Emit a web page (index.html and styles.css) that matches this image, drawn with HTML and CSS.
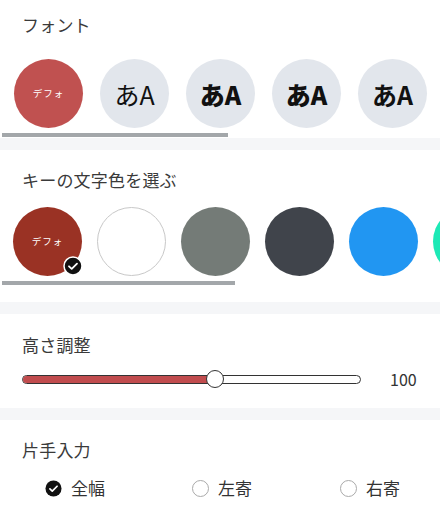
FILE: index.html
```html
<!DOCTYPE html>
<html lang="ja">
<head>
<meta charset="utf-8">
<link rel="stylesheet" href="styles.css">
</head>
<body>
<div class="page">
  <section class="sec sec-font">
    <div class="label">フォント</div>
    <div class="row row-font">
      <div class="circle fc-default"><span class="def">デフォ</span></div>
      <div class="circle fc"><span class="aa w4">あA</span></div>
      <div class="circle fc"><span class="aa w9">あA</span></div>
      <div class="circle fc"><span class="aa w9">あA</span></div>
      <div class="circle fc"><span class="aa w7">あA</span></div>
    </div>
    <div class="scroll scroll1"></div>
  </section>
  <div class="band"></div>
  <section class="sec sec-color">
    <div class="label">キーの文字色を選ぶ</div>
    <div class="row row-color">
      <div class="circle cc c-red"><span class="def">デフォ</span>
        <span class="badge"><svg viewBox="0 0 20 20" width="20" height="20"><circle cx="10" cy="10" r="9" fill="#111" stroke="#fff" stroke-width="1.5"/><path d="M6 10.3l2.7 2.6L14 7.6" fill="none" stroke="#fff" stroke-width="1.8" stroke-linecap="round" stroke-linejoin="round"/></svg></span>
      </div>
      <div class="circle cc c-white"></div>
      <div class="circle cc c-gray"></div>
      <div class="circle cc c-dark"></div>
      <div class="circle cc c-blue"></div>
      <div class="circle cc c-teal"></div>
    </div>
    <div class="scroll scroll2"></div>
  </section>
  <div class="band"></div>
  <section class="sec sec-height">
    <div class="label">高さ調整</div>
    <div class="slider-row">
      <div class="track">
        <div class="fill" style="width:57%"></div>
        <div class="thumb" style="left:57%"></div>
      </div>
      <div class="value">100</div>
    </div>
  </section>
  <div class="band"></div>
  <section class="sec sec-hand">
    <div class="label">片手入力</div>
    <div class="radios">
      <div class="radio">
        <svg class="rb" viewBox="0 0 18 18" width="17" height="17"><circle cx="9" cy="9" r="8.5" fill="#111"/><path d="M5.2 9.3l2.5 2.4L12.8 6.6" fill="none" stroke="#fff" stroke-width="1.8" stroke-linecap="round" stroke-linejoin="round"/></svg>
        <span class="rt">全幅</span>
      </div>
      <div class="radio">
        <span class="rb-empty"></span>
        <span class="rt">左寄</span>
      </div>
      <div class="radio">
        <span class="rb-empty"></span>
        <span class="rt">右寄</span>
      </div>
    </div>
  </section>
</div>
</body>
</html>
```
FILE: styles.css
```css
html, body {
  margin: 0;
  padding: 0;
  background: #fff;
}
body {
  font-family: "Noto Sans CJK JP", "Noto Sans", sans-serif;
  color: #333;
  width: 440px;
  height: 515px;
  overflow: hidden;
}
.page {
  display: flex;
  flex-direction: column;
}
.label {
  font-size: 17px;
  line-height: 22px;
  height: 22px;
  padding-left: 22px;
  color: #3a3a3a;
  letter-spacing: 0.2px;
}
.sec-font { height: 138px; padding-top: 14px; box-sizing: border-box; }
.sec-color { height: 152px; padding-top: 19px; box-sizing: border-box; }
.sec-height { height: 94px; padding-top: 20px; box-sizing: border-box; }
.sec-hand { height: 95px; padding-top: 19px; box-sizing: border-box; }

.band {
  height: 12px;
  background: #f5f6f8;
}
.row {
  display: flex;
  overflow: hidden;
  white-space: nowrap;
}
.row-font {
  margin-top: 23px;
  padding-left: 14px;
  gap: 17px;
}
.row-color {
  margin-top: 16px;
  padding-left: 13px;
  gap: 15px;
}
.circle {
  flex: 0 0 69px;
  width: 69px;
  height: 69px;
  border-radius: 50%;
  display: flex;
  align-items: center;
  justify-content: center;
  box-sizing: border-box;
  position: relative;
}
.fc-default { background: #c05150; }
.fc { background: #e2e6ec; }
.def {
  color: #fff;
  font-size: 9.5px;
  letter-spacing: 1px;
  line-height: 1;
}
.aa {
  font-size: 25px;
  line-height: 1;
  color: #111;
  margin-top: 2px;
}
.w4 { font-weight: 400; }
.w7 { font-weight: 700; }
.w9 { font-weight: 900; }
.c-red { background: #9a3224; }
.c-white { background: #fff; border: 1px solid #c8c8c8; }
.c-gray { background: #747b77; }
.c-dark { background: #40444b; }
.c-blue { background: #2196f2; }
.c-teal { background: #1de9b6; }
.badge {
  position: absolute;
  right: -1px;
  bottom: 0;
  width: 20px;
  height: 20px;
  display: block;
}
.badge svg { display: block; }
.scroll {
  height: 4px;
  margin-left: 2px;
  background: #a3a7aa;
}
.scroll1 { width: 226px; margin-top: 5px; }
.scroll2 { width: 233px; margin-top: 5px; }

.slider-row {
  margin-top: 12px;
  height: 22px;
  display: flex;
  align-items: center;
  padding-left: 22px;
}
.track {
  position: relative;
  width: 339px;
  height: 9px;
  box-sizing: border-box;
  border: 1.5px solid #333;
  border-radius: 5px;
  background: #fff;
}
.fill {
  height: 100%;
  background: #c14c4e;
  border-radius: 4px 0 0 4px;
}
.thumb {
  position: absolute;
  top: 50%;
  width: 18px;
  height: 18px;
  box-sizing: border-box;
  border: 1.5px solid #333;
  border-radius: 50%;
  background: #fff;
  transform: translate(-50%, -50%);
}
.value {
  margin-left: 29px;
  font-size: 16px;
  line-height: 22px;
  color: #333;
}
.radios {
  margin-top: 16px;
  height: 22px;
  display: grid;
  grid-template-columns: 147px 148px auto;
  padding-left: 45px;
  align-items: center;
}
.radio {
  display: flex;
  align-items: center;
  gap: 9px;
}
.rb { display: block; }
.rb-empty {
  width: 17px;
  height: 17px;
  box-sizing: border-box;
  border: 1px solid #aaa;
  border-radius: 50%;
  display: block;
}
.rt {
  font-size: 17px;
  line-height: 22px;
  color: #333;
}
```
